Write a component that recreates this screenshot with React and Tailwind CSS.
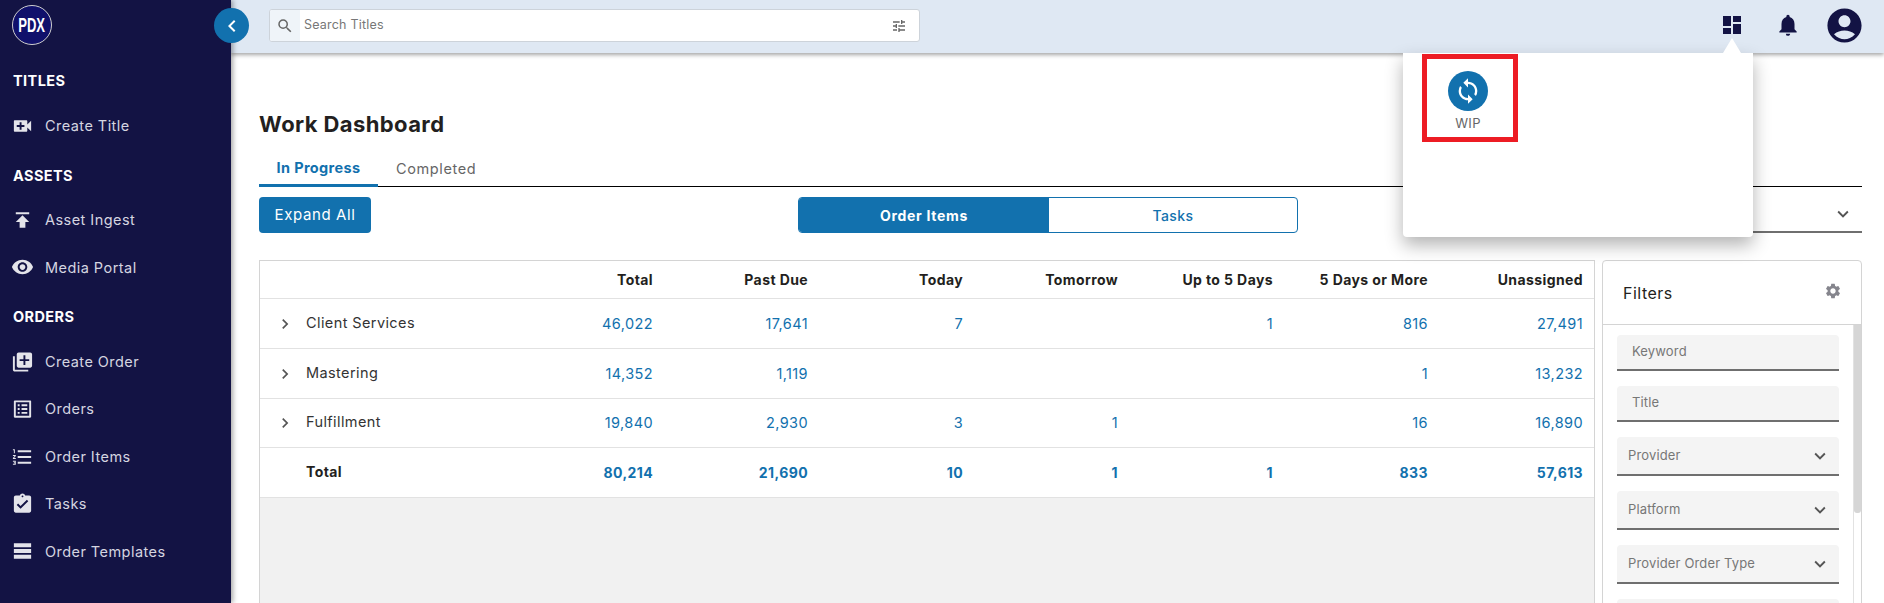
import React from "react";
import {
  MdVideoCall, MdPublish, MdVisibility, MdLibraryAdd, MdListAlt, MdFormatListNumbered,
  MdAssignmentTurnedIn, MdTableRows, MdDashboard, MdNotifications, MdAccountCircle, MdSync,
  MdSettings, MdTune, MdSearch, MdChevronRight, MdExpandMore, MdChevronLeft,
} from "react-icons/md";

const F = { fontFamily: '"Inter", "Open Sans", sans-serif' };

const nav = [
  { head: "TITLES", items: [{ t: "Create Title", I: MdVideoCall }] },
  { head: "ASSETS", items: [{ t: "Asset Ingest", I: MdPublish }, { t: "Media Portal", I: MdVisibility }] },
  {
    head: "ORDERS",
    items: [
      { t: "Create Order", I: MdLibraryAdd },
      { t: "Orders", I: MdListAlt },
      { t: "Order Items", I: MdFormatListNumbered },
      { t: "Tasks", I: MdAssignmentTurnedIn },
      { t: "Order Templates", I: MdTableRows },
    ],
  },
];

const cols = ["Total", "Past Due", "Today", "Tomorrow", "Up to 5 Days", "5 Days or More", "Unassigned"];
const rows = [
  { n: "Client Services", v: ["46,022", "17,641", "7", "", "1", "816", "27,491"], h: "h-[50px]" },
  { n: "Mastering", v: ["14,352", "1,119", "", "", "", "1", "13,232"], h: "h-[50px]" },
  { n: "Fulfillment", v: ["19,840", "2,930", "3", "1", "", "16", "16,890"], h: "h-[49px]" },
];
const totals = ["80,214", "21,690", "10", "1", "1", "833", "57,613"];

function Sidebar() {
  return (
    <aside className="w-[231px] shrink-0 h-full bg-[#131344] text-[#d5d5e0] shadow-[2px_0_5px_rgba(0,0,0,0.35)] z-10">
      <div className="h-[60px] pl-[12px] pt-[5px]">
        <div className="w-[40px] h-[40px] rounded-full bg-[#10106b] border border-[#cfcfcf] flex items-center justify-center text-white font-bold text-[21px] [font-family:'Liberation_Sans',sans-serif]">
          <span className="inline-block scale-x-[0.62]">PDX</span>
        </div>
      </div>
      {nav.map((s) => (
        <section key={s.head} className="pb-[5px]">
          <h3 className="h-[42px] pl-[13px] flex items-center text-white font-bold text-[14.5px] tracking-[0.4px]">{s.head}</h3>
          {s.items.map(({ t, I }) => (
            <div key={t} className="h-[47.4px] flex items-center pl-[11px] text-[14.5px] tracking-[0.45px]">
              <span className="w-[23px] h-[23px] flex items-center justify-center shrink-0"><I size={24} color="#e4e4ea" /></span>
              <span className="ml-[11px]">{t}</span>
            </div>
          ))}
        </section>
      ))}
    </aside>
  );
}

function Topbar() {
  return (
    <header className="h-[53px] shrink-0 bg-[#dfe8f3] shadow-[0_2px_4px_rgba(0,0,0,0.35)] flex items-center pl-[38px] pr-[19.5px] z-[5]">
      <div className="w-[651px] h-[33px] -mt-[2px] bg-white border border-[#cdd3da] rounded-[3px] flex items-center overflow-hidden">
        <span className="w-[30px] h-full bg-[#eff4f9] flex items-center justify-center text-[#666]"><MdSearch size={18} /></span>
        <span className="ml-[4px] text-[12.5px] text-[#777] tracking-[0.2px]">Search Titles</span>
        <span className="ml-auto mr-[12px] text-[#666]"><MdTune size={16} /></span>
      </div>
      <div className="ml-auto -mt-[3px] flex items-center text-[#131344]">
        <MdDashboard size={24} />
        <span className="ml-[31px]"><MdNotifications size={26} /></span>
        <span className="ml-[22.5px]"><MdAccountCircle size={41} /></span>
      </div>
    </header>
  );
}

function Table() {
  const grid = "grid grid-cols-[238px_repeat(7,155px)] items-center pr-[11px]";
  return (
    <div className="flex-1 min-w-0 h-[400px] border border-[#d4d4d4] bg-[#f1f1f1]">
      <div className={`${grid} h-[38px] bg-white border-b border-[#e2e2e2] text-[14px] tracking-[0.4px] font-bold text-[#231f20]`}>
        <span />
        {cols.map((c) => <span key={c} className="text-right">{c}</span>)}
      </div>
      {rows.map((r) => (
        <div key={r.n} className={`${grid} ${r.h} bg-white border-b border-[#e2e2e2] text-[14.5px] tracking-[0.4px]`}>
          <span className="flex items-center pl-[15px] text-[#333]">
            <MdChevronRight size={20} color="#555" />
            <span className="ml-[11px] -mt-[2px]">{r.n}</span>
          </span>
          {r.v.map((v, i) => <span key={i} className="text-right text-[#1271ae]">{v}</span>)}
        </div>
      ))}
      <div className={`${grid} h-[50px] bg-white border-b border-[#e2e2e2] text-[14px] tracking-[0.4px] font-bold`}>
        <span className="pl-[46px] text-[#231f20] -mt-[2px]">Total</span>
        {totals.map((v, i) => <span key={i} className="text-right text-[#1271ae]">{v}</span>)}
      </div>
    </div>
  );
}

function Field({ label, select, cls }) {
  return (
    <div className={`${cls} shrink-0 bg-[#f4f4f4] rounded-t-[4px] border-b-2 border-[#6f6f6f] flex items-center text-[13px] tracking-[0.15px] text-[#777] ${select ? "pl-[11px] pr-[8px]" : "pl-[15px]"}`}>
      <span>{label}</span>
      {select && <span className="ml-auto text-[#555]"><MdExpandMore size={22} /></span>}
    </div>
  );
}

function FilterPanel() {
  return (
    <div className="w-[260px] shrink-0 h-[400px] border border-[#d4d4d4] rounded-t-[4px] bg-white flex flex-col">
      <div className="h-[64px] shrink-0 border-b border-[#d4d4d4] flex items-center justify-between pl-[20px] pr-[19px]">
        <span className="text-[16px] text-[#231f20] tracking-[0.5px]">Filters</span>
        <MdSettings size={18} color="#85858d" className="-mt-[3px]" />
      </div>
      <div className="flex flex-1 min-h-0 overflow-hidden">
        <div className="flex-1 min-w-0 pl-[14px] pr-[14px] pt-[10px] flex flex-col">
          <Field label="Keyword" cls="h-[36px] mb-[15px]" />
          <Field label="Title" cls="h-[36px] mb-[15px]" />
          <Field label="Provider" select cls="h-[39px] mb-[15px]" />
          <Field label="Platform" select cls="h-[39px] mb-[15px]" />
          <Field label="Provider Order Type" select cls="h-[39px] mb-[15px]" />
          <Field label="" cls="h-[39px]" />
        </div>
        <div className="w-[8px] shrink-0 border-l border-[#e2e2e2] bg-white">
          <div className="h-[188px] bg-[#d6d6d6] rounded-b-[3px]" />
        </div>
      </div>
    </div>
  );
}

function Popup() {
  return (
    <div className="absolute left-[1403px] top-[53px] w-[350px] h-[184px] bg-white rounded-b-[4px] shadow-[0_8px_18px_rgba(0,0,0,0.3)] z-20">
      <div className="absolute -top-[15px] left-[320px] w-0 h-0 border-l-[9px] border-r-[9px] border-b-[15px] border-l-transparent border-r-transparent border-b-white" />
      <div className="ml-[19px] mt-[1px] w-[96px] h-[88px] border-[5px] border-[#ed1c24] flex flex-col items-center pt-[12px] pr-[4px]">
        <span className="w-[40px] h-[40px] shrink-0 rounded-full bg-[#1271ae] flex items-center justify-center text-white"><MdSync size={28} /></span>
        <span className="mt-[4px] text-[13px] leading-[16px] text-[#666] tracking-[0.3px]">WIP</span>
      </div>
    </div>
  );
}

export default function App() {
  return (
    <div style={F} className="relative w-[1884px] h-[603px] overflow-hidden flex bg-white">
      <Sidebar />
      <div className="flex-1 min-w-0 flex flex-col">
        <Topbar />
        <main className="flex-1 min-h-0 pl-[28px] pr-[22px]">
          <h1 className="mt-[59px] h-[24px] flex items-center text-[22px] font-bold text-[#231f20] tracking-[0.4px]">Work Dashboard</h1>
          <div className="mt-[15px] h-[36px] flex border-b border-black text-[14.5px]">
            <span className="w-[119px] h-[36px] flex items-center justify-center font-bold text-[#1271ae] tracking-[0.35px] border-b-[3px] border-[#1271ae]">In Progress</span>
            <span className="ml-[18px] flex items-center text-[#666] tracking-[0.6px]">Completed</span>
          </div>
          <div className="mt-[10px] h-[36px] flex">
            <button className="w-[112px] h-[36px] bg-[#1271ae] rounded-[4px] text-white text-[15px] tracking-[0.6px]">Expand All</button>
            <div className="ml-[427px] w-[500px] h-[36px] flex border border-[#1271ae] rounded-[4px] overflow-hidden text-[14px]">
              <span className="w-[250px] bg-[#1271ae] text-white font-bold tracking-[0.7px] flex items-center justify-center">Order Items</span>
              <span className="flex-1 flex items-center justify-center text-[#1271ae] font-medium tracking-[0.4px]">Tasks</span>
            </div>
            <div className="ml-auto w-[300px] h-[36px] border-b-2 border-[#6f6f6f] flex items-center justify-end pr-[8px] text-[#555]">
              <MdExpandMore size={22} />
            </div>
          </div>
          <div className="mt-[27px] flex gap-[7px]">
            <Table />
            <FilterPanel />
          </div>
        </main>
      </div>
      <button className="absolute left-[214px] top-[8px] w-[35px] h-[35px] rounded-full bg-[#1271ae] text-white flex items-center justify-center z-20">
        <MdChevronLeft size={24} />
      </button>
      <Popup />
    </div>
  );
}
